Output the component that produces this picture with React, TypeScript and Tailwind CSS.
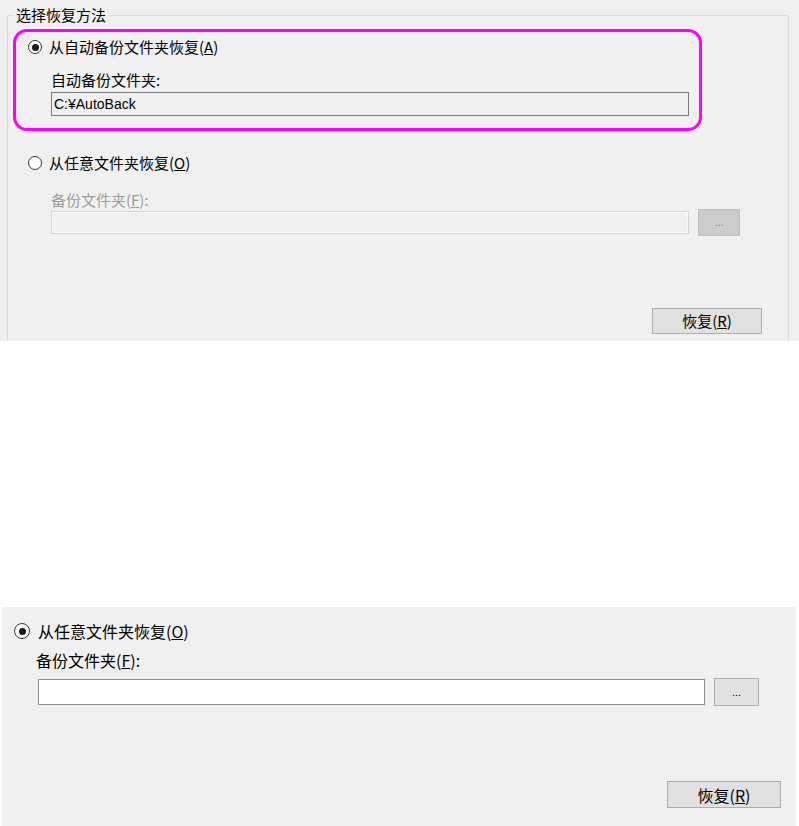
import React from 'react';

const cjk = "font-['Noto_Sans_CJK_SC',sans-serif]";

function Radio({ checked, size }: { checked: boolean; size: string }) {
  return (
    <span
      className={`${size} shrink-0 rounded-full border border-[#333333] bg-white flex items-center justify-center`}
    >
      {checked && <span className="w-[7px] h-[7px] rounded-full bg-[#1a1a1a]" />}
    </span>
  );
}

function TopPanel() {
  return (
    <div className={`h-[341px] bg-[#f0f0f0] overflow-hidden pl-[7px] pr-[10px] pt-[5px] ${cjk} text-black`}>
      <fieldset className="border border-[#dcdcdc] h-[420px]">
        <legend className="ml-[6px] px-[2px] text-[15px] leading-[20px]">选择恢复方法</legend>

        <div className="mt-[4px] ml-[5px] w-[689px] border-[3px] border-[#ff00ff] rounded-[14px] pt-[5px] pb-[12px]">
          <div className="flex items-center h-[20px] pl-[12px] gap-[7px]">
            <Radio checked size="w-[14px] h-[14px]" />
            <span className="text-[15px] leading-[20px]">
              从自动备份文件夹恢复(<span className="underline">A</span>)
            </span>
          </div>
          <div className="mt-[13px] pl-[35px] text-[15px] leading-[20px]">自动备份文件夹:</div>
          <div className="mt-[2px] ml-[35px] w-[638px] h-[24px] border border-[#7a7a7a] bg-[#f0f0f0] flex items-center pl-[2px] font-['Liberation_Sans',sans-serif] text-[14px]">
            C:¥AutoBack
          </div>
        </div>

        <div className="mt-[22px] ml-[20px] flex items-center h-[20px] gap-[7px]">
          <Radio checked={false} size="w-[14px] h-[14px]" />
          <span className="text-[15px] leading-[20px]">
            从任意文件夹恢复(<span className="underline">O</span>)
          </span>
        </div>
        <div className="mt-[18px] ml-[43px] text-[15px] leading-[18px] text-[#9d9d9d]">
          备份文件夹(<span className="underline">F</span>):
        </div>
        <div className="ml-[43px] flex items-center h-[27px] gap-[9px]">
          <div className="w-[638px] h-[23px] border border-[#d4d4d4] bg-[#f0f0f0] shadow-[inset_0_0_0_1px_#fafafa]" />
          <div className="w-[42px] h-[27px] border border-[#bfbfbf] bg-[#cccccc] flex items-center justify-center text-[11px] text-[#8a8a8a] font-['Liberation_Sans',sans-serif]">
            ...
          </div>
        </div>

        <div className="mt-[72px] ml-[644px] w-[110px] h-[26px] border border-[#adadad] bg-[#e1e1e1] flex items-center justify-center text-[15px]">
          恢复(<span className="underline">R</span>)
        </div>
      </fieldset>
    </div>
  );
}

function BottomPanel() {
  return (
    <div className={`ml-[2px] w-[794px] h-[219px] bg-[#f0f0f0] pt-[14px] ${cjk} text-black`}>
      <div className="flex items-center h-[20px] pl-[12px] gap-[8px]">
        <Radio checked size="w-[16px] h-[16px]" />
        <span className="text-[16px] leading-[20px]">
          从任意文件夹恢复(<span className="underline">O</span>)
        </span>
      </div>
      <div className="mt-[9px] ml-[34px] text-[16px] leading-[20px]">
        备份文件夹(<span className="underline">F</span>):
      </div>
      <div className="mt-[8px] ml-[36px] flex items-center h-[28px] gap-[9px]">
        <div className="w-[667px] h-[26px] border border-[#8f8f8f] bg-white" />
        <div className="w-[45px] h-[28px] border border-[#adadad] bg-[#e1e1e1] flex items-center justify-center text-[11px] font-['Liberation_Sans',sans-serif]">
          ...
        </div>
      </div>
      <div className="mt-[75px] ml-[665px] w-[114px] h-[27px] border border-[#adadad] bg-[#e1e1e1] flex items-center justify-center text-[16px]">
        恢复(<span className="underline">R</span>)
      </div>
    </div>
  );
}

export default function App() {
  return (
    <div className="w-[799px] h-[826px] bg-white flex flex-col overflow-hidden">
      <TopPanel />
      <div className="h-[266px]" />
      <BottomPanel />
    </div>
  );
}
